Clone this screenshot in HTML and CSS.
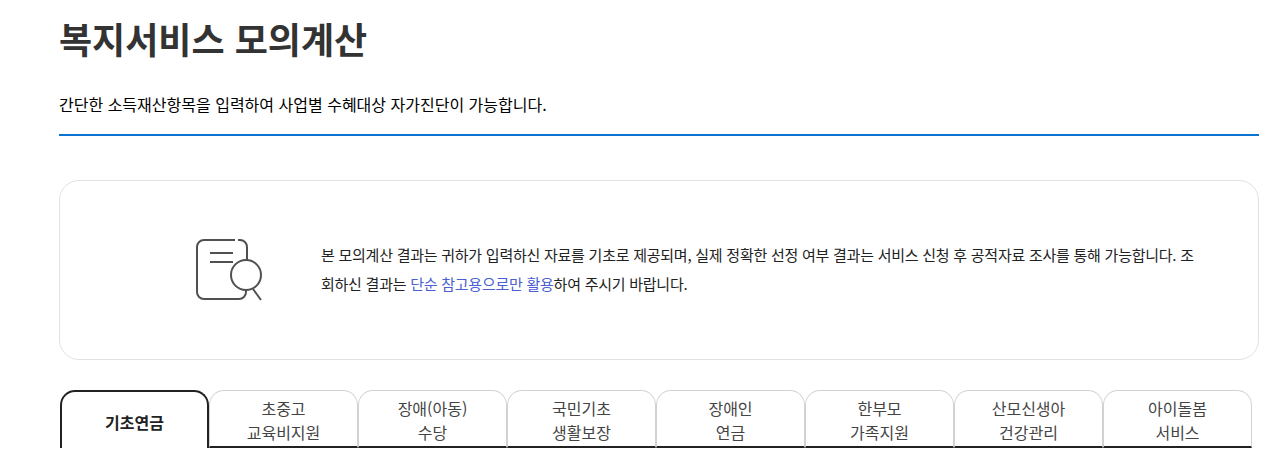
FILE: index.html
```html
<!DOCTYPE html>
<html lang="ko">
<head>
  <meta charset="UTF-8">
  <title>복지서비스 모의계산</title>
  <link rel="stylesheet" href="styles.css">
</head>
<body>
<div class="wrap">
  <div class="head">
    <h1 class="title">복지서비스 모의계산</h1>
    <p class="desc">간단한 소득재산항목을 입력하여 사업별 수혜대상 자가진단이 가능합니다.</p>
  </div>

  <div class="notice">
    <svg class="notice-icon" width="66" height="62" viewBox="0 0 66 62" fill="none" stroke="#505050" stroke-width="2">
      <path d="M39 1H8a7 7 0 0 0-7 7v45a7 7 0 0 0 7 7h35a7 7 0 0 0 7-7v-3"/>
      <path d="M42 1h2a7 7 0 0 1 7 7v13"/>
      <path d="M14 14h23M14 23h23"/>
      <circle cx="50" cy="36" r="15"/>
      <path d="M57 50l8 11"/>
    </svg>
    <p class="notice-text">본 모의계산 결과는 귀하가 입력하신 자료를 기초로 제공되며, 실제 정확한 선정 여부 결과는 서비스 신청 후 공적자료 조사를 통해 가능합니다. 조회하신 결과는 <span class="point">단순 참고용으로만 활용</span>하여 주시기 바랍니다.</p>
  </div>

  <ul class="tabs">
    <li class="tab active">기초연금</li>
    <li class="tab">초중고<br>교육비지원</li>
    <li class="tab">장애(아동)<br>수당</li>
    <li class="tab">국민기초<br>생활보장</li>
    <li class="tab">장애인<br>연금</li>
    <li class="tab">한부모<br>가족지원</li>
    <li class="tab">산모신생아<br>건강관리</li>
    <li class="tab">아이돌봄<br>서비스</li>
  </ul>
</div>
</body>
</html>
```

FILE: styles.css
```css
* {
  margin: 0;
  padding: 0;
  box-sizing: border-box;
}

html, body {
  height: 462px;
  overflow: hidden;
  background: #fff;
}

body {
  font-family: "Noto Sans CJK KR", "Noto Sans", sans-serif;
  color: #222;
}

.wrap {
  width: 1200px;
  margin-left: 59px;
}

.head {
  height: 136px;
  padding-top: 12px;
  border-bottom: 2px solid #0b74d0;
}

.title {
  font-size: 36px;
  font-weight: 700;
  line-height: 52px;
  color: #333;
}

.desc {
  margin-top: 28px;
  font-size: 16px;
  line-height: 24px;
  color: #000;
}

.notice {
  display: flex;
  align-items: center;
  height: 180px;
  margin-top: 44px;
  padding-left: 136px;
  border: 1px solid #e2e2e2;
  border-radius: 20px;
}

.notice-icon {
  flex: none;
  margin-right: 59px;
}

.notice-text {
  width: 880px;
  padding-bottom: 2px;
  font-size: 15px;
  line-height: 29px;
  letter-spacing: -0.25px;
  word-break: break-all;
  color: #222;
}

.point {
  color: #4a5fd0;
}

.tabs {
  display: flex;
  height: 58px;
  margin-top: 30px;
  margin-left: 1px;
  list-style: none;
}

.tab {
  display: flex;
  align-items: center;
  justify-content: center;
  width: 149px;
  padding-top: 2px;
  border: 1px solid #d2d2d2;
  border-bottom: 2px solid #222;
  border-radius: 15px 15px 0 0;
  font-size: 16px;
  line-height: 24px;
  text-align: center;
  color: #444;
}

.tab.active {
  padding-top: 3px;
  border: 2px solid #222;
  border-bottom: 0;
  font-weight: 700;
  color: #222;
}
```
